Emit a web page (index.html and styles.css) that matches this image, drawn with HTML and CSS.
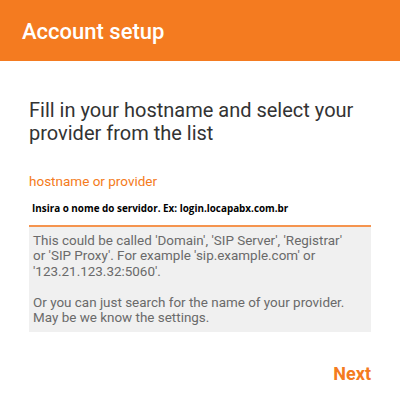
FILE: index.html
```html
<!DOCTYPE html>
<html>
<head>
<meta charset="utf-8">
<link rel="stylesheet" href="styles.css">
</head>
<body>
<header class="appbar"><h1 class="appbar-title">Account setup</h1></header>
<main class="content">
  <h2 class="heading">Fill in your hostname and select your provider from the list</h2>
  <div class="label">hostname or provider</div>
  <div class="field">Insira o nome do servidor. Ex: login.locapabx.com.br</div>
  <div class="help">
    <p>This could be called 'Domain', 'SIP Server', 'Registrar' or 'SIP Proxy'. For example 'sip.example.com' or '123.21.123.32:5060'.</p>
    <p>Or you can just search for the name of your provider. May be we know the settings.</p>
  </div>
  <div class="actions"><span class="next">Next</span></div>
</main>
</body>
</html>
```
FILE: styles.css
```css
html, body { margin: 0; padding: 0; background: #fff; }
body { width: 400px; height: 405px; overflow: hidden; font-family: Roboto, "Noto Sans", sans-serif; }
.appbar { background: #f47b20; height: 61px; display: flex; align-items: center; padding: 2px 0 0 22px; box-sizing: border-box; }
.appbar-title { margin: 0; color: #fff; font-size: 22px; font-weight: 500; line-height: normal; }
.content { padding: 38px 29px 0 29px; }
.heading { margin: 0; font-size: 20px; font-weight: 400; color: #333; line-height: 23px; }
.label { margin-top: 27.5px; color: #f47b20; font-size: 13.5px; line-height: 16px; }
.field { margin-top: 12px; padding: 0 0 10px 3px; font-family: "Open Sans", sans-serif; font-weight: 700; font-size: 9.9px; color: #000; line-height: 14px; border-bottom: 2px solid #f5944f; }
.help { background: #f0f0f0; padding: 6px 22px 6px 4px; color: #6a6a6a; font-size: 13.45px; line-height: 15.5px; }
.help p { margin: 0; }
.help p + p { margin-top: 15.5px; }
.actions { display: flex; justify-content: flex-end; margin-top: 31px; }
.next { color: #f47b20; font-weight: 700; font-size: 18px; line-height: 21px; }
```
